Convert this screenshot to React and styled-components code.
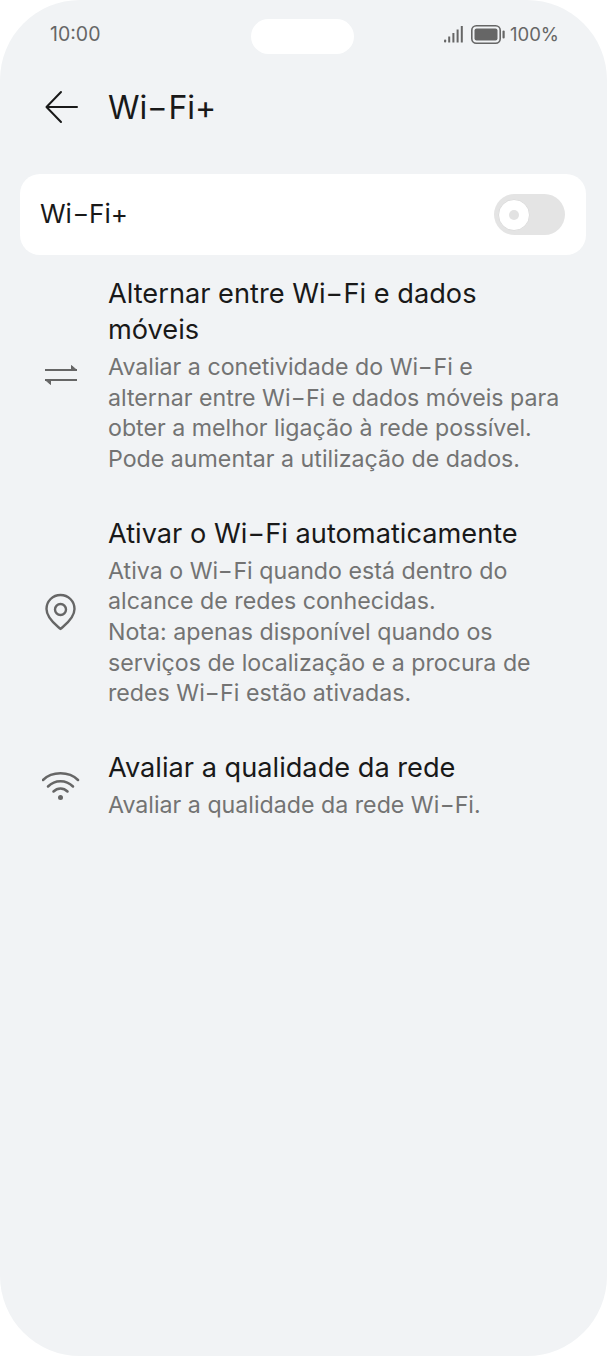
import React from "react";
import styled, { createGlobalStyle } from "styled-components";

const Global = createGlobalStyle`
  html, body { margin: 0; padding: 0; background: #ffffff; }
`;

const Screen = styled.div`
  width: 607px;
  height: 1356px;
  box-sizing: border-box;
  background: #f1f3f5;
  border-radius: 80px;
  overflow: hidden;
  font-family: "Inter", "Noto Sans", "Liberation Sans", sans-serif;
  display: flex;
  flex-direction: column;
`;

const StatusBar = styled.div`
  height: 70px;
  padding: 16px 48px 0 50px;
  box-sizing: border-box;
  display: flex;
  align-items: flex-start;
  justify-content: space-between;
  color: #666666;
  font-size: 19.5px;
  line-height: 36px;
  position: relative;
`;

const Pill = styled.div`
  position: absolute;
  left: 251px;
  top: 19px;
  width: 103px;
  height: 35px;
  border-radius: 18px;
  background: #ffffff;
`;

const StatusRight = styled.div`
  height: 36px;
  display: flex;
  align-items: center;
  gap: 5px;
  font-size: 18.5px;
`;

const Header = styled.header`
  height: 74px;
  padding-left: 44px;
  display: flex;
  align-items: center;
  gap: 28px;
`;

const Title = styled.h1`
  margin: 0;
  font-size: 32px;
  font-weight: 400;
  color: #191919;
`;

const Card = styled.section`
  margin: 30px 21px 0 20px;
  height: 81px;
  padding: 0 21px 0 20px;
  background: #ffffff;
  border-radius: 20px;
  display: flex;
  align-items: center;
  justify-content: space-between;
`;

const CardLabel = styled.span`
  font-size: 26px;
  line-height: 30px;
  margin-top: -2px;
  color: #191919;
`;

const Toggle = styled.div`
  width: 71px;
  height: 41px;
  border-radius: 21px;
  background: #e4e4e4;
  display: flex;
  align-items: center;
  padding-left: 4px;
  box-sizing: border-box;
`;

const Knob = styled.div`
  width: 32px;
  height: 32px;
  box-sizing: border-box;
  border: 1px solid #dcdcdc;
  border-radius: 50%;
  background: #ffffff;
  display: flex;
  align-items: center;
  justify-content: center;
  &::after {
    content: "";
    width: 10px;
    height: 10px;
    border-radius: 50%;
    background: #e2e2e2;
  }
`;

const List = styled.div`
  margin-top: 21px;
  display: flex;
  flex-direction: column;
  gap: 41.5px;
`;

const Row = styled.div`
  display: flex;
  align-items: center;
  padding: 0 20px 0 42px;
`;

const IconSlot = styled.div`
  width: 66px;
  flex: none;
  display: flex;
  align-items: center;
`;

const RowText = styled.div`
  flex: 1;
`;

const RowTitle = styled.div`
  font-size: 27.2px;
  line-height: 36px;
  color: #191919;
`;

const RowDesc = styled.div`
  margin-top: 4px;
  font-size: 23.2px;
  line-height: 30.6px;
  color: #737373;
`;

const Line = styled.div`
  white-space: nowrap;
`;

const Dash = styled.span`
  display: inline-block;
  margin: 0 0.1em;
  transform: scaleX(1.4);
`;

const Hy = ({ children }) =>
  children.split("-").map((part, i) => (
    <React.Fragment key={i}>
      {i > 0 && <Dash>-</Dash>}
      {part}
    </React.Fragment>
  ));

const Lines = ({ text }) =>
  text.split("\n").map((l) => (
    <Line key={l}>
      <Hy>{l}</Hy>
    </Line>
  ));

const Back = () => (
  <svg width="36" height="36" viewBox="0 0 36 36" fill="none" stroke="#191919" strokeWidth="2" strokeLinecap="round" strokeLinejoin="round">
    <path d="M3 18H33M17 3L2.5 18L17 33" />
  </svg>
);

const Signal = () => (
  <svg width="22" height="17" viewBox="0 0 22 17" fill="#666">
    <rect x="0" y="13.5" width="2.2" height="3" rx="1" />
    <rect x="4.2" y="10.5" width="2" height="6" />
    <rect x="8.4" y="7" width="2" height="9.5" />
    <rect x="12.6" y="3.5" width="2" height="13" />
    <rect x="16.8" y="0" width="2" height="16.5" />
  </svg>
);

const Battery = () => (
  <svg width="34" height="19" viewBox="0 0 34 19" fill="none">
    <rect x="0.8" y="0.8" width="28.4" height="17.4" rx="4.5" stroke="#666" strokeWidth="1.6" />
    <rect x="3.5" y="3.5" width="23" height="12" rx="2" fill="#666" />
    <rect x="31.5" y="5.5" width="2.2" height="8" rx="1.1" fill="#666" />
  </svg>
);

const Swap = () => (
  <svg width="38" height="24" viewBox="0 0 38 24" fill="none" stroke="#666" strokeWidth="2">
    <path d="M3 7H35" />
    <path d="M3 17H35" />
    <path d="M29.5 2.5L34.5 7H29.5Z" fill="#666" strokeWidth="1" />
    <path d="M8.5 21.5L3.5 17H8.5Z" fill="#666" strokeWidth="1" />
  </svg>
);

const Pin = () => (
  <svg width="38" height="38" viewBox="0 0 38 38" fill="none" stroke="#666" strokeWidth="2.4">
    <path d="M18.5 36C15.5 33 4.5 26 4.5 16C4.5 8 10.8 2 18.5 2C26.2 2 32.5 8 32.5 16C32.5 26 21.5 33 18.5 36Z" strokeLinejoin="round" />
    <circle cx="18.5" cy="16.5" r="5.5" />
  </svg>
);

const Wifi = () => (
  <svg width="38" height="30" viewBox="0 0 38 30" fill="none" stroke="#666" strokeWidth="2.5" strokeLinecap="round">
    <path d="M1 9C10 0 27 0 36 9" />
    <path d="M6 15.5C13 8.5 24 8.5 31 15.5" />
    <path d="M11.5 20.5C15.5 16.5 21.5 16.5 25.5 20.5" />
    <circle cx="18.5" cy="26.5" r="2.5" fill="#666" stroke="none" />
  </svg>
);

const rows = [
  {
    icon: <Swap />,
    title: "Alternar entre Wi-Fi e dados\nmóveis",
    desc: "Avaliar a conetividade do Wi-Fi e\nalternar entre Wi-Fi e dados móveis para\nobter a melhor ligação à rede possível.\nPode aumentar a utilização de dados.",
  },
  {
    icon: <Pin />,
    title: "Ativar o Wi-Fi automaticamente",
    desc: "Ativa o Wi-Fi quando está dentro do\nalcance de redes conhecidas.\nNota: apenas disponível quando os\nserviços de localização e a procura de\nredes Wi-Fi estão ativadas.",
  },
  {
    icon: <Wifi />,
    title: "Avaliar a qualidade da rede",
    desc: "Avaliar a qualidade da rede Wi-Fi.",
  },
];

export default function App() {
  return (
    <>
      <Global />
      <Screen>
        <StatusBar>
          <span>10:00</span>
          <Pill />
          <StatusRight>
            <Signal />
            <Battery />
            <span>100%</span>
          </StatusRight>
        </StatusBar>
        <Header>
          <Back />
          <Title><Hy>Wi-Fi+</Hy></Title>
        </Header>
        <Card>
          <CardLabel><Hy>Wi-Fi+</Hy></CardLabel>
          <Toggle>
            <Knob />
          </Toggle>
        </Card>
        <List>
          {rows.map((r) => (
            <Row key={r.title}>
              <IconSlot>{r.icon}</IconSlot>
              <RowText>
                <RowTitle><Lines text={r.title} /></RowTitle>
                <RowDesc><Lines text={r.desc} /></RowDesc>
              </RowText>
            </Row>
          ))}
        </List>
      </Screen>
    </>
  );
}
